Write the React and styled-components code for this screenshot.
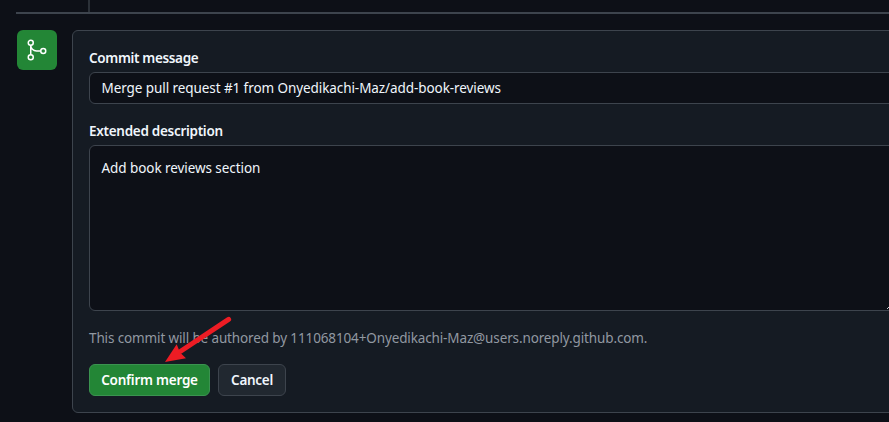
import React from 'react';
import styled, { createGlobalStyle } from 'styled-components';

const GlobalStyle = createGlobalStyle`
  * { box-sizing: border-box; }
  body {
    margin: 0;
    overflow: hidden;
    background: #0d1017;
    color: #f0f6fc;
    font: 13.5px/20px "Segoe UI", "Noto Sans", "Open Sans", sans-serif;
  }
`;

const Page = styled.main`
  position: relative;
  width: 100%;
  height: 422px;
  overflow: hidden;
`;

const TimelineEnd = styled.div`
  height: 14px;
  margin-left: 16px;
  padding-left: 72px;
  border-bottom: 2px solid #3d444d;
`;

const TimelineStem = styled.div`
  width: 2px;
  height: 12px;
  background: #2b3138;
`;

const MergeRow = styled.section`
  display: flex;
  gap: 15px;
  padding: 16px 0 0 17px;
`;

const MergeBadge = styled.div`
  display: grid;
  place-items: center;
  flex: none;
  width: 40px;
  height: 40px;
  border-radius: 6px;
  background: #238636;
`;

const Panel = styled.form`
  flex: none;
  width: 840px;
  height: 383px;
  padding: 17px 0 0 16px;
  border: 1px solid #3d444d;
  border-radius: 6px;
  background: #151b23;
`;

const Label = styled.label`
  display: block;
  height: 20px;
  margin-bottom: 4px;
  font-weight: 600;
  letter-spacing: ${(p) => p.$tracking}px;
  white-space: nowrap;
`;

const Field = styled.div`
  width: 808px;
  height: ${(p) => p.$height}px;
  margin-bottom: ${(p) => p.$gap}px;
  padding: ${(p) => p.$top}px 11.5px 0;
  border: 1px solid #3d444d;
  border-radius: 6px;
  background: #0d1017;
  letter-spacing: ${(p) => p.$tracking}px;
  white-space: nowrap;
  position: relative;
`;

const ResizeGrip = styled.svg`
  position: absolute;
  right: 1px;
  bottom: 1px;
`;

const Note = styled.p`
  margin: 0 0 16px;
  color: #9198a1;
  letter-spacing: ${(p) => p.$tracking}px;
  white-space: nowrap;
`;

const Actions = styled.div`
  display: flex;
  gap: 8px;
`;

const Button = styled.button`
  width: ${(p) => p.$width}px;
  height: 32px;
  padding: 0;
  border: 1px solid ${(p) => (p.$primary ? '#3b9350' : '#3d444d')};
  border-radius: 6px;
  background: ${(p) => (p.$primary ? '#238636' : '#212830')};
  color: ${(p) => (p.$primary ? '#ffffff' : '#f0f6fc')};
  font: inherit;
  font-weight: 600;
  letter-spacing: ${(p) => p.$tracking}px;
  white-space: nowrap;
`;

const Arrow = styled.svg`
  position: absolute;
  left: 160px;
  top: 312px;
  pointer-events: none;
`;

function MergeIcon() {
  return (
    <svg width="24" height="24" viewBox="0 0 24 24" fill="none" stroke="#fff" strokeWidth="1.5">
      <circle cx="5.75" cy="4.75" r="2.5" />
      <circle cx="5.75" cy="19.25" r="2.5" />
      <circle cx="18.25" cy="13" r="2.5" />
      <path d="M5.75 7.25v9.5M5.75 7.25C5.75 10.4 8.3 13 11.5 13h4.25" />
    </svg>
  );
}

export default function App() {
  return (
    <Page>
      <GlobalStyle />
      <TimelineEnd>
        <TimelineStem />
      </TimelineEnd>
      <MergeRow>
        <MergeBadge>
          <MergeIcon />
        </MergeBadge>
        <Panel>
          <Label $tracking={-0.34}>Commit message</Label>
          <Field $height={32} $gap={17} $top={5} $tracking={-0.078}>
            Merge pull request #1 from Onyedikachi-Maz/add-book-reviews
          </Field>
          <Label $tracking={-0.29}>Extended description</Label>
          <Field $height={166} $gap={17} $top={12} $tracking={-0.07}>
            Add book reviews section
            <ResizeGrip width="8" height="8" viewBox="0 0 8 8" stroke="#c8cbd0">
              <path d="M0 8 8 0M5 8 8 5" />
            </ResizeGrip>
          </Field>
          <Note $tracking={-0.13}>
            This commit will be authored by 111068104+Onyedikachi-Maz@users.noreply.github.com.
          </Note>
          <Actions>
            <Button type="button" $primary $width={121} $tracking={-0.24}>
              Confirm merge
            </Button>
            <Button type="button" $width={68} $tracking={-0.3}>
              Cancel
            </Button>
          </Actions>
        </Panel>
      </MergeRow>
      <Arrow width="78" height="56" viewBox="0 0 78 56">
        <path d="M68.6 7.3 21 39" stroke="#ed1c24" strokeWidth="5" strokeLinecap="round" />
        <path d="M5 50 16.7 32.3 20 40.5 26 46.3Z" fill="#ed1c24" />
      </Arrow>
    </Page>
  );
}
